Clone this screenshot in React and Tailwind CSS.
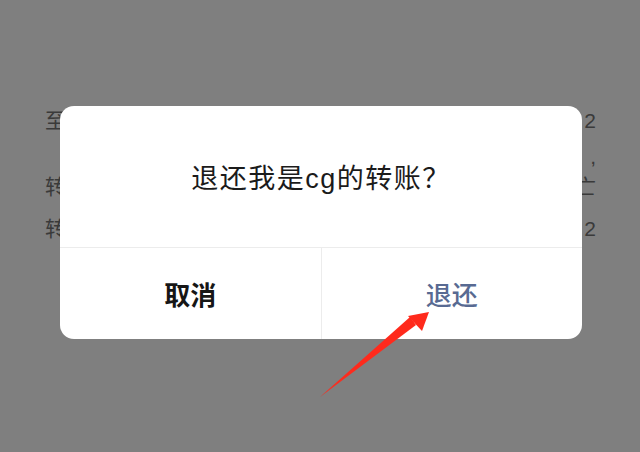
import React from "react";

const font = { fontFamily: '"Liberation Sans", "Noto Sans CJK SC", sans-serif' };

const rows = [
  { left: "至", right: "2", mt: "mt-[110px]" },
  { left: "", right: ",", mt: "mt-[14px]" },
  { left: "转", right: "亡", mt: "mt-[8px]" },
  { left: "转", right: "2", mt: "mt-[20px]" },
];

const App = () => {
  return (
    <div
      className="relative w-[640px] h-[452px] overflow-hidden bg-[#7f7f7f]"
      style={font}
    >
      {/* page behind the mask */}
      <div className="flex flex-col pl-[45px] pr-[44px] text-[21px] leading-[22px] text-[#3a3a3a]">
        {rows.map((r, i) => (
          <div key={i} className={`flex justify-between ${r.mt}`}>
            <span>{r.left}</span>
            <span>{r.right}</span>
          </div>
        ))}
      </div>

      {/* dialog */}
      <div className="absolute left-[60px] top-[106px] w-[522px] h-[233px] bg-white rounded-[14px] flex flex-col overflow-hidden">
        <div className="h-[142px] flex items-center justify-center border-b border-[#ececec]">
          <span className="text-[27px] tracking-[1.5px] text-[#1b1b1b] pt-[6px]">
            退还我是cg的转账？
          </span>
        </div>
        <div className="flex flex-1">
          <button className="flex-1 flex items-center justify-center pt-[5px] border-r border-[#ececec] text-[26px] font-semibold text-[#161616]">
            取消
          </button>
          <button className="flex-1 flex items-center justify-center pt-[5px] text-[26px] font-medium text-[#586a92]">
            退还
          </button>
        </div>
      </div>

      {/* red arrow */}
      <svg
        className="absolute left-0 top-0"
        width="640"
        height="452"
        viewBox="0 0 640 452"
      >
        <path d="M320 397 L414 322 L410 317 Z" fill="#ff2a1c" />
        <path d="M429 312 L408 316 L422 331 Z" fill="#ff2a1c" />
        <path d="M320 397 L416 325 L413 321 Z" fill="#ff2a1c" />
      </svg>
    </div>
  );
};

export default App;
